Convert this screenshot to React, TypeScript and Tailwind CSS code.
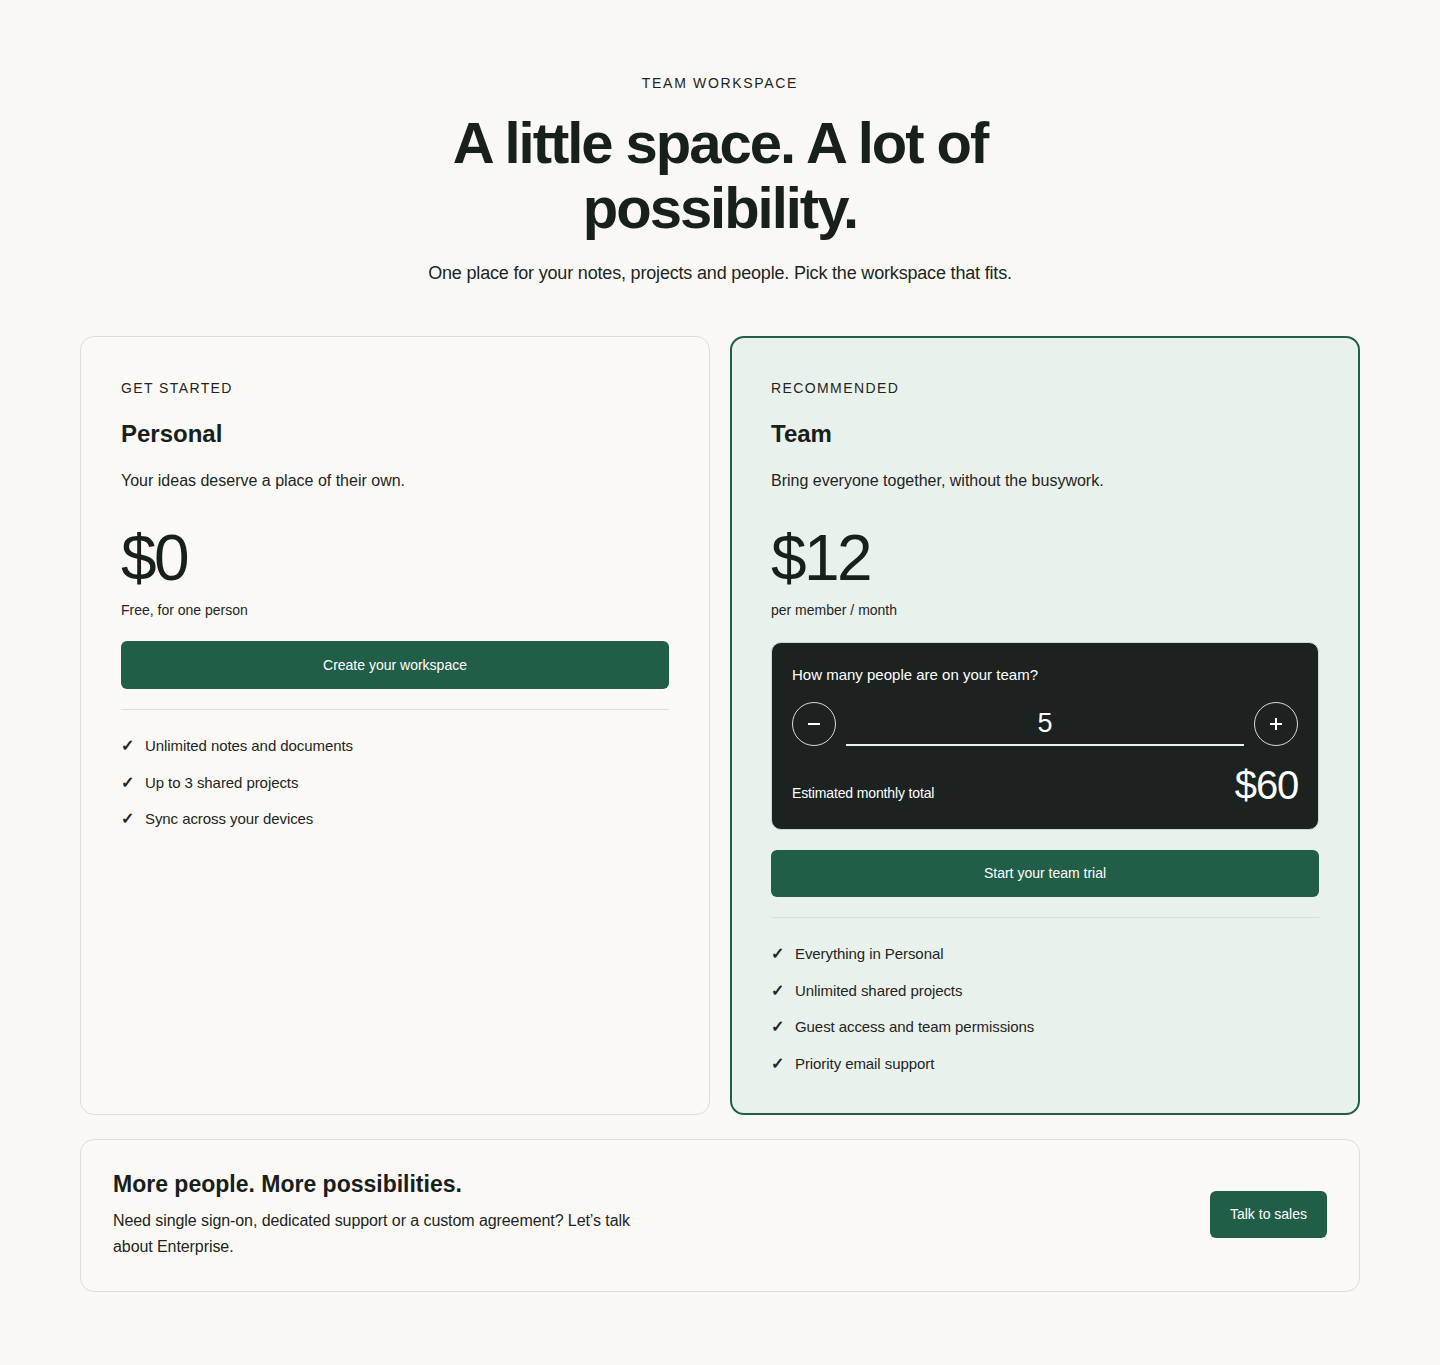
import { useState } from 'react';

const font = { fontFamily: '"Liberation Sans", Arial, Helvetica, sans-serif' };

const personalFeatures = ['Unlimited notes and documents', 'Up to 3 shared projects', 'Sync across your devices'];
const teamFeatures = [
  'Everything in Personal',
  'Unlimited shared projects',
  'Guest access and team permissions',
  'Priority email support',
];

function FeatureList({ items }: { items: string[] }) {
  return (
    <ul className="mt-[25px] flex flex-col gap-[14.5px]">
      {items.map((item) => (
        <li key={item} className="flex items-center gap-[12px] text-[15px] leading-[22px] tracking-[-0.005em] text-[#1e2522]">
          <span className="w-[12px] text-[16px] font-semibold">✓</span>
          {item}
        </li>
      ))}
    </ul>
  );
}

export default function App() {
  const [seats, setSeats] = useState(5);
  const price = 12;

  return (
    <div style={font} className="min-h-[1365px] bg-[#f9f8f5] px-[80px] pb-[73px] pt-[73px] text-[#18201c]">
      <header className="flex flex-col items-center text-center">
        <p className="text-[14px] leading-[20px] tracking-[0.12em] text-[#1e2522]">TEAM WORKSPACE</p>
        <h1 className="mt-[17px] max-w-[620px] text-[58px] font-bold leading-[65px] tracking-[-0.035em] text-[#18201c]">
          A little space. A lot of possibility.
        </h1>
        <p className="mt-[20px] text-[18px] leading-[26px] tracking-[-0.01em] text-[#1e2522]">
          One place for your notes, projects and people. Pick the workspace that fits.
        </p>
      </header>

      <div className="mt-[50px] grid grid-cols-2 gap-[20px]">
        <section className="rounded-[14px] border border-[#e0ddd6] bg-[#faf9f6] p-[40px]">
          <p className="text-[14px] leading-[22px] tracking-[0.1em] text-[#1e2522]">GET STARTED</p>
          <h2 className="mt-[20px] text-[24px] font-bold leading-[30px]">Personal</h2>
          <p className="mt-[20px] text-[16px] leading-[24px] text-[#1e2522]">Your ideas deserve a place of their own.</p>
          <p className="mt-[29px] text-[64px] leading-[72px] tracking-[-0.04em]">$0</p>
          <p className="mt-[6px] text-[14px] leading-[20px] text-[#1e2522]">Free, for one person</p>
          <button className="mt-[21px] flex h-[48px] w-full items-center justify-center rounded-[6px] bg-[#215e48] text-[14px] text-white">
            Create your workspace
          </button>
          <div className="mt-[20px] h-px bg-[#e2dfd8]" />
          <FeatureList items={personalFeatures} />
        </section>

        <section className="rounded-[14px] border-2 border-[#215e48] bg-[#e9f1ec] px-[39px] pb-[38px] pt-[39px]">
          <p className="text-[14px] leading-[22px] tracking-[0.1em] text-[#1e2522]">RECOMMENDED</p>
          <h2 className="mt-[20px] text-[24px] font-bold leading-[30px]">Team</h2>
          <p className="mt-[20px] text-[16px] leading-[24px] text-[#1e2522]">
            Bring everyone together, without the busywork.
          </p>
          <p className="mt-[29px] text-[64px] leading-[72px] tracking-[-0.04em]">$12</p>
          <p className="mt-[6px] text-[14px] leading-[20px] text-[#1e2522]">per member / month</p>

          <div className="mt-[22px] rounded-[10px] border border-[#cfd6d2] bg-[#1b2220] px-[20px] pb-[22px] pt-[21px] text-white">
            <p className="text-[15px] leading-[22px]">How many people are on your team?</p>
            <div className="mt-[16px] flex items-center gap-[10px]">
              <button
                onClick={() => setSeats(Math.max(1, seats - 1))}
                className="flex h-[44px] w-[44px] shrink-0 items-center justify-center rounded-full border border-[#d8dcda]"
                aria-label="Remove a person"
              >
                <span className="h-[2px] w-[12px] bg-white" />
              </button>
              <div className="flex h-[44px] flex-1 items-center justify-center border-b-2 border-[#f0f0f0] text-[27px] leading-[32px]">
                {seats}
              </div>
              <button
                onClick={() => setSeats(seats + 1)}
                className="flex h-[44px] w-[44px] shrink-0 items-center justify-center rounded-full border border-[#d8dcda]"
                aria-label="Add a person"
              >
                <svg width="12" height="12" viewBox="0 0 12 12" fill="none" stroke="white" strokeWidth="2">
                  <path d="M6 0v12M0 6h12" />
                </svg>
              </button>
            </div>
            <div className="mt-[17px] flex items-end justify-between">
              <p className="pb-[4px] text-[14px] leading-[20px] tracking-[-0.01em]">Estimated monthly total</p>
              <p className="text-[40px] leading-[44px] tracking-[-0.03em]">${seats * price}</p>
            </div>
          </div>

          <button className="mt-[20px] flex h-[47px] w-full items-center justify-center rounded-[6px] bg-[#215e48] text-[14px] text-white">
            Start your team trial
          </button>
          <div className="mt-[20px] h-px bg-[#d8e0db]" />
          <FeatureList items={teamFeatures} />
        </section>
      </div>

      <section className="mt-[24px] flex items-center justify-between rounded-[14px] border border-[#e0ddd6] bg-[#faf9f6] px-[32px] pb-[31px] pt-[29px]">
        <div>
          <h3 className="text-[23px] font-bold leading-[30px]">More people. More possibilities.</h3>
          <p className="mt-[9px] max-w-[535px] text-[16px] leading-[26px] tracking-[-0.005em] text-[#1e2522]">
            Need single sign-on, dedicated support or a custom agreement? Let’s talk about Enterprise.
          </p>
        </div>
        <button className="h-[47px] rounded-[6px] bg-[#215e48] px-[20px] text-[14px] text-white">Talk to sales</button>
      </section>
    </div>
  );
}
